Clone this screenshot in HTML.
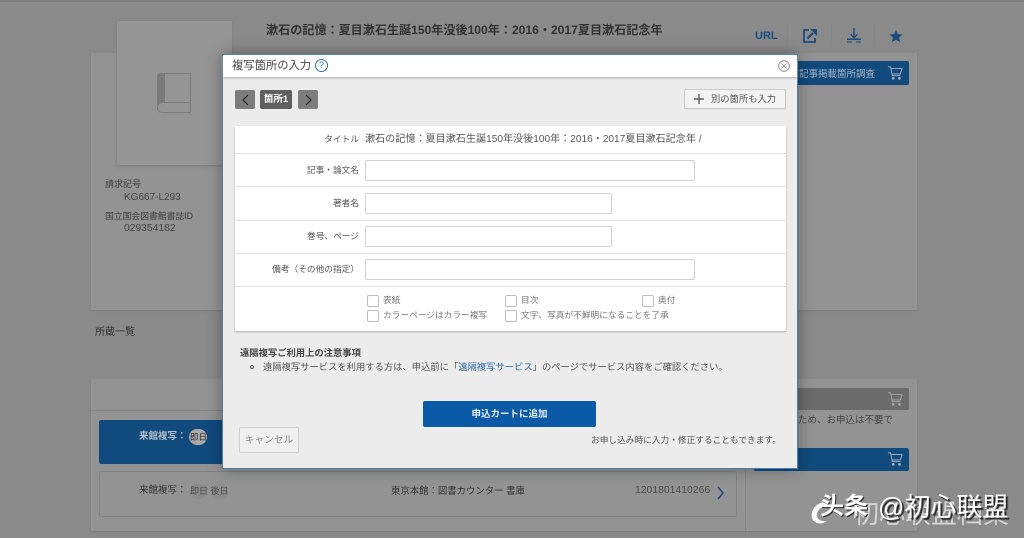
<!DOCTYPE html>
<html lang="ja"><head><meta charset="utf-8"><title>複写箇所の入力</title>
<style>
html,body{margin:0;padding:0}
body{width:1024px;height:538px;overflow:hidden;position:relative;background:#8a8a8a;font-family:"Liberation Sans","Noto Sans CJK JP",sans-serif;font-size:9.5px;color:#444}
div,span,svg{position:absolute;box-sizing:border-box}
.t{white-space:nowrap;line-height:14px}
.panel{background:#939393;box-shadow:0 1px 2px #7c7c7c}
.inp{background:#fff;border:1px solid #d2d2d2;border-radius:2px;height:21px;left:365px}
.line{left:235px;width:551px;height:1px;background:#e3e3e3}
.lab{right:665px;text-align:right;color:#555;font-size:8.7px}
.cb{width:12px;height:12px;border:1px solid #bdbdbd;border-radius:2px;background:#fff}
.nav{background:#7d7d7d;border-radius:2px;top:90px;height:19px;width:20px}
.cart{width:16px;height:16px}
.c{font-size:8.7px;color:#777}
</style></head>
<body>
<!-- background page -->
<div style="left:0;top:0;width:1024px;height:2px;background:#808080"></div>
<div class="panel" style="left:91px;top:53px;width:826px;height:257px"></div>
<div style="left:117px;top:21px;width:115px;height:144px;background:#959595;box-shadow:0 1px 3px #7a7a7a"></div>
<svg style="left:157px;top:73px" width="34" height="40" viewBox="0 0 34 40"><path d="M0 4q0-4 4-4h4v30H4q-3 0-4 3z" fill="#7b7b7b"/><path d="M6 .5h27.500v39H6q-5.500 0-5.500-5T6 29.500h27.500" fill="none" stroke="#7b7b7b" stroke-width="1"/></svg>
<div class="t" style="left:266px;top:23px;font-size:12.100px;font-weight:bold;color:#333">漱石の記憶：夏目漱石生誕150年没後100年：2016・2017夏目漱石記念年</div>
<div class="t" style="left:755px;top:29px;font-size:11px;font-weight:bold;color:#1d4b7c">URL</div>
<div style="left:787px;top:24px;width:1px;height:23px;background:#858585"></div>
<div style="left:831px;top:24px;width:1px;height:23px;background:#858585"></div>
<div style="left:874px;top:24px;width:1px;height:23px;background:#858585"></div>
<svg style="left:802px;top:28px" width="16" height="16" viewBox="0 0 16 16"><path d="M7 2H2v12h11V10" fill="none" stroke="#1d4b7c" stroke-width="1.800"/><path d="M5.500 10.500L11 5" stroke="#1d4b7c" stroke-width="2.200"/><path d="M8 1h7v7z" fill="#1d4b7c"/></svg>
<svg style="left:846px;top:27px" width="16" height="16" viewBox="0 0 16 16"><path d="M8 1v9" stroke="#1d4b7c" stroke-width="1.500"/><path d="M4.500 7L8 11l3.500-4" fill="none" stroke="#1d4b7c" stroke-width="1.300"/><path d="M1 11.500h14v1.500H1z" fill="#1d4b7c"/><path d="M1 14.500h5v1H1zM10 14.500h5v1h-5z" fill="#1d4b7c"/></svg>
<svg style="left:889px;top:29px" width="14" height="14" viewBox="0 0 14 14"><path d="M7 .8l1.900 4.300 4.600.4-3.500 3 1.100 4.600L7 10.700l-4.100 2.400L4 8.500.5 5.500l4.600-.4z" fill="#1d4b7c"/></svg>
<div style="left:790px;top:61px;width:119px;height:24px;background:#114a7c;border-radius:2px"></div>
<div class="t" style="left:799px;top:68px;color:#a9b6c4">記事掲載箇所調査</div>
<svg class="cart" style="left:887px;top:65px" viewBox="0 0 18 18"><path d="M1 2h3l2 10h9M5 4h12l-2 6H6" fill="none" stroke="#a9b6c4"/><circle cx="7" cy="15" r="1.500" fill="#a9b6c4"/><circle cx="14" cy="15" r="1.500" fill="#a9b6c4"/></svg>
<div class="t" style="left:105px;top:177px;color:#3e3e3e;font-size:9px">請求記号</div>
<div class="t" style="left:124px;top:191px;color:#444;font-size:10px">KG667-L293</div>
<div class="t" style="left:105px;top:209px;color:#3e3e3e;font-size:8.800px">国立国会図書館書誌ID</div>
<div class="t" style="left:124px;top:222px;color:#444;font-size:10.300px">029354182</div>
<div class="t" style="left:95px;top:326px;color:#333;font-size:10px">所蔵一覧</div>

<div class="panel" style="left:91px;top:379px;width:826px;height:152px"></div>
<div style="left:91px;top:410px;width:654px;height:1px;background:#858585"></div>
<div style="left:745px;top:410px;width:1px;height:121px;background:#858585"></div>
<div style="left:99px;top:420px;width:200px;height:44px;background:#114a7c;border-radius:2px"></div>
<div class="t" style="left:139px;top:430px;color:#b5bec9;font-weight:bold;font-size:9.500px">来館複写：</div>
<div style="left:189px;top:429px;width:18px;height:16px;background:#a8a8a8;border-radius:8px"></div>
<div class="t" style="left:190px;top:430px;color:#333;font-size:8.500px">即日</div>
<div style="left:99px;top:471px;width:638px;height:46px;border:1px solid #828282;border-radius:3px"></div>
<div class="t" style="left:139px;top:484px;color:#333;font-size:9.500px">来館複写：</div>
<div style="left:190px;top:484px;width:17px;height:15px;background:#8c8c8c;border-radius:8px"></div>
<div style="left:211px;top:484px;width:17px;height:15px;background:#8c8c8c;border-radius:8px"></div>
<div class="t" style="left:190px;top:484px;color:#4e4e4e;font-size:9px">即日 後日</div>
<div class="t" style="left:391px;top:484px;color:#333;font-size:9.400px">東京本館：図書カウンター 書庫</div>
<div class="t" style="left:635px;top:484px;color:#4c4c4c;font-size:10.400px">1201801410266</div>
<svg style="left:716px;top:486px" width="10" height="14" viewBox="0 0 10 14"><path d="M2 1l5 6-5 6" fill="none" stroke="#1d4b7c" stroke-width="1.600"/></svg>
<div style="left:790px;top:388px;width:119px;height:22px;background:#6b6b6b;border-radius:2px"></div>
<svg class="cart" style="left:887px;top:391px" viewBox="0 0 18 18"><path d="M1 2h3l2 10h9M5 4h12l-2 6H6" fill="none" stroke="#a9a9a9"/><circle cx="7" cy="15" r="1.500" fill="#a9a9a9"/><circle cx="14" cy="15" r="1.500" fill="#a9a9a9"/></svg>
<div class="t" style="left:798px;top:414px;color:#444;font-size:9.500px">ため、お申込は不要で</div>
<div style="left:754px;top:448px;width:155px;height:23px;background:#114a7c;border-radius:2px"></div>
<svg class="cart" style="left:887px;top:451px" viewBox="0 0 18 18"><path d="M1 2h3l2 10h9M5 4h12l-2 6H6" fill="none" stroke="#a9b6c4"/><circle cx="7" cy="15" r="1.500" fill="#a9b6c4"/><circle cx="14" cy="15" r="1.500" fill="#a9b6c4"/></svg>

<!-- modal -->
<div style="left:222px;top:54px;width:576px;height:415px;background:#ececec;border:1px solid #4a7fb0;box-shadow:0 0 14px rgba(0,0,0,.35)"></div>
<div style="left:223px;top:55px;width:574px;height:22px;background:#fff;box-shadow:0 1px 2px #aaa"></div>
<div class="t" style="left:232px;top:59px;font-size:11.300px;color:#444">複写箇所の入力</div>
<div style="left:315px;top:59px;width:13px;height:13px;border:1px solid #2a6fb3;border-radius:50%;color:#2a6fb3;font-size:9px;line-height:11px;text-align:center">?</div>
<svg style="left:778px;top:60px" width="12" height="12" viewBox="0 0 12 12"><circle cx="6" cy="6" r="5.300" fill="none" stroke="#777" stroke-width=".8"/><path d="M3.500 3.500l5 5M8.500 3.500l-5 5" stroke="#777" stroke-width=".8"/></svg>
<div class="nav" style="left:235px"></div>
<svg style="left:241px;top:94px" width="9" height="12" viewBox="0 0 9 12"><path d="M7 1L2 6l5 5" fill="none" stroke="#222" stroke-width="1.100"/></svg>
<div class="nav" style="left:260px;width:32px;background:#5f5f5f;color:#fff;font-weight:bold;font-size:9.500px;line-height:20px;text-align:center">箇所1</div>
<div class="nav" style="left:298px"></div>
<svg style="left:304px;top:94px" width="9" height="12" viewBox="0 0 9 12"><path d="M2 1l5 5-5 5" fill="none" stroke="#222" stroke-width="1.100"/></svg>
<div style="left:684px;top:89px;width:102px;height:20px;background:#f3f3f3;border:1px solid #ccc;border-radius:2px;box-shadow:0 1px 1px #ddd"></div>
<svg style="left:694px;top:94px" width="10" height="10" viewBox="0 0 10 10"><path d="M5 0v10M0 5h10" stroke="#444" stroke-width="1.200"/></svg>
<div class="t" style="left:711px;top:92px;color:#555;font-size:9.300px">別の箇所も入力</div>

<div style="left:235px;top:126px;width:551px;height:205px;background:#fff;box-shadow:0 1px 2px #aaa"></div>
<div class="line" style="top:153px"></div>
<div class="line" style="top:186px"></div>
<div class="line" style="top:220px"></div>
<div class="line" style="top:253px"></div>
<div class="line" style="top:286px"></div>
<div class="t lab" style="top:132px">タイトル</div>
<div class="t" style="left:365px;top:133px;color:#555;font-size:10.100px">漱石の記憶：夏目漱石生誕150年没後100年：2016・2017夏目漱石記念年 /</div>
<div class="t lab" style="top:163px">記事・論文名</div>
<div class="inp" style="top:160px;width:330px"></div>
<div class="t lab" style="top:196px">著者名</div>
<div class="inp" style="top:193px;width:247px"></div>
<div class="t lab" style="top:229px">巻号、ページ</div>
<div class="inp" style="top:226px;width:247px"></div>
<div class="t lab" style="top:262px">備考（その他の指定）</div>
<div class="inp" style="top:259px;width:330px"></div>
<div class="cb" style="left:367px;top:295px"></div><div class="t c" style="left:383px;top:293px">表紙</div>
<div class="cb" style="left:505px;top:295px"></div><div class="t c" style="left:521px;top:293px">目次</div>
<div class="cb" style="left:642px;top:295px"></div><div class="t c" style="left:658px;top:293px">奥付</div>
<div class="cb" style="left:367px;top:310px"></div><div class="t c" style="left:383px;top:308px">カラーページはカラー複写</div>
<div class="cb" style="left:505px;top:310px"></div><div class="t c" style="left:521px;top:308px">文字、写真が不鮮明になることを了承</div>

<div class="t" style="left:240px;top:346px;font-size:9.300px;font-weight:bold;color:#444">遠隔複写ご利用上の注意事項</div>
<div style="left:250px;top:365px;width:4px;height:4px;border:1px solid #555;border-radius:50%"></div>
<div class="t" style="left:263px;top:360px;font-size:9.300px;color:#555">遠隔複写サービスを利用する方は、申込前に「<span style="position:static;color:#2a6cab">遠隔複写サービス</span>」のページでサービス内容をご確認ください。</div>
<div style="left:423px;top:401px;width:173px;height:26px;background:#0b5aa8;border-radius:2px;color:#e8eef5;font-size:9.500px;font-weight:bold;line-height:27px;text-align:center">申込カートに追加</div>
<div style="left:239px;top:427px;width:60px;height:26px;background:#f0f0f0;border:1px solid #ccc;border-radius:2px;color:#888;font-size:9.700px;line-height:26px;text-align:center">キャンセル</div>
<div class="t" style="left:591px;top:433px;font-size:8.700px;color:#555">お申し込み時に入力・修正することもできます。</div>

<!-- watermark -->
<div class="t" style="left:853px;top:500px;font-size:26px;line-height:28px;color:#d4d4d4">初心联盟档案</div>
<svg style="left:809px;top:497px" width="26" height="30" viewBox="0 0 26 30"><path d="M20 5C8 4 1 13 3 21c2 6 10 7 15 3-5 1-10-1-10-6 0-6 6-9 12-9z" fill="#fff"/></svg>
<div class="t" style="left:820px;top:493px;font-size:24px;line-height:28px;color:#fff;font-weight:bold;text-shadow:1px 1px 0 #222">头条</div>
<div class="t" style="left:878px;top:493px;font-size:26px;line-height:28px;color:#fff;text-shadow:2px 2px 1px #222">@初心联盟</div>
</body></html>
